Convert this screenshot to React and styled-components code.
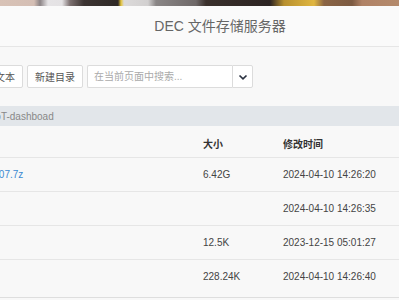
import React from "react";
import styled, { createGlobalStyle } from "styled-components";

const GlobalStyle = createGlobalStyle`
    html, body {
        margin: 0;
        padding: 0;
        overflow: hidden;
        background: #f8f8f8;
        font-family: "Liberation Sans", "Noto Sans CJK SC", sans-serif;
    }
`;

const Page = styled.div`
    width: 660px;
    margin-left: -110px;
`;

const Banner = styled.div`
    height: 6px;
    margin-left: 110px;
    width: 399px;
    background: linear-gradient(90deg,
        #d8c2b6 0px, #d4beb4 34px, #8c8486 40px, #e6e4e6 48px, #e4e2e4 62px,
        #7c7070 70px, #3c3432 84px, #2e2826 118px, #e4c43a 121px, #dcdada 124px,
        #d2d0d0 148px, #8a8686 156px, #6e6868 196px, #3a302c 206px, #2c2422 270px,
        #b8902e 284px, #e0b640 314px, #8a6444 324px, #7c5a42 352px, #b08266 362px, #b48a6c 399px);
`;

const Header = styled.header`
    height: 41px;
    display: flex;
    align-items: center;
    justify-content: center;
    padding-bottom: 2px;
    box-sizing: border-box;
    background: #fafafa;
    border-bottom: 1px solid #e6e6e6;
`;

const Title = styled.h1`
    margin: 0;
    font-size: 14px;
    font-weight: normal;
    color: #666;
`;

const Toolbar = styled.div`
    display: flex;
    align-items: center;
    gap: 4px;
    margin-top: 18px;
    padding-left: 17px;
`;

const Button = styled.button`
    height: 23px;
    padding: 0 7px;
    border: 1px solid #dcdcdc;
    border-radius: 2px;
    background: #fff;
    color: #555;
    font-family: inherit;
    font-size: 10px;
    cursor: pointer;
`;

const SearchGroup = styled.div`
    display: flex;
    height: 23px;
`;

const SearchInput = styled.input`
    width: 145px;
    box-sizing: border-box;
    height: 23px;
    padding: 0 6px;
    border: 1px solid #dcdcdc;
    border-right: none;
    border-radius: 2px 0 0 2px;
    background: #fff;
    font-family: inherit;
    font-size: 10px;
    color: #333;
    outline: none;
    &::placeholder {
        color: #aaa;
    }
`;

const DropButton = styled.button`
    width: 21px;
    height: 23px;
    padding: 0;
    display: flex;
    align-items: center;
    justify-content: center;
    border: 1px solid #dcdcdc;
    border-radius: 0 2px 2px 0;
    background: #fff;
    cursor: pointer;
`;

const Crumbs = styled.div`
    display: flex;
    align-items: center;
    gap: 6px;
    height: 20px;
    margin-top: 18px;
    padding-left: 8px;
    background: #e2e6ea;
    font-size: 10px;
    color: #888;
`;

const Table = styled.div`
    margin-top: 4px;
    border-bottom: 1px solid #dedede;
`;

const Row = styled.div`
    display: grid;
    grid-template-columns: 302px 80px 1fr;
    align-items: center;
    height: ${p => (p.head ? "27px" : "33px")};
    padding-left: 11px;
    border-bottom: ${p => (p.last ? "none" : "1px solid #e6e6e6")};
    padding-bottom: ${p => (p.last ? "4px" : "0")};
    font-size: 10px;
    font-weight: ${p => (p.head ? "bold" : "normal")};
    color: ${p => (p.head ? "#333" : "#444")};
`;

const NameLink = styled.a`
    color: #3b8ad2;
    text-decoration: none;
    white-space: nowrap;
`;

const files = [
    { name: "IoT-dashboad-20240407.7z", size: "6.42G", time: "2024-04-10 14:26:20" },
    { name: "logs", size: "", time: "2024-04-10 14:26:35" },
    { name: "README.md", size: "12.5K", time: "2023-12-15 05:01:27" },
    { name: "config.json", size: "228.24K", time: "2024-04-10 14:26:40" },
];

const Chevron = () => (
    <svg width="10" height="10" viewBox="0 0 10 10">
        <polyline points="1.5,3.5 5,6.8 8.5,3.5" fill="none" stroke="#2a3140" strokeWidth="1.7" />
    </svg>
);

const App = () => {
    return (
        <>
            <GlobalStyle />
            <Page>
                <Banner />
                <Header>
                    <Title>DEC 文件存储服务器</Title>
                </Header>
                <Toolbar>
                    <Button>上传文件</Button>
                    <Button>新建文本</Button>
                    <Button>新建目录</Button>
                    <SearchGroup>
                        <SearchInput placeholder="在当前页面中搜索..." />
                        <DropButton><Chevron /></DropButton>
                    </SearchGroup>
                </Toolbar>
                <Crumbs>
                    <span>全部文件</span>
                    <span>/</span>
                    <span>share</span>
                    <span>/</span>
                    <span>IoT-dashboad</span>
                </Crumbs>
                <Table>
                    <Row head>
                        <span>名称</span>
                        <span>大小</span>
                        <span>修改时间</span>
                    </Row>
                    {files.map((f, i) => (
                        <Row key={f.name} last={i === files.length - 1}>
                            <NameLink href="#">{f.name}</NameLink>
                            <span>{f.size}</span>
                            <span>{f.time}</span>
                        </Row>
                    ))}
                </Table>
            </Page>
        </>
    );
};

export default App;
